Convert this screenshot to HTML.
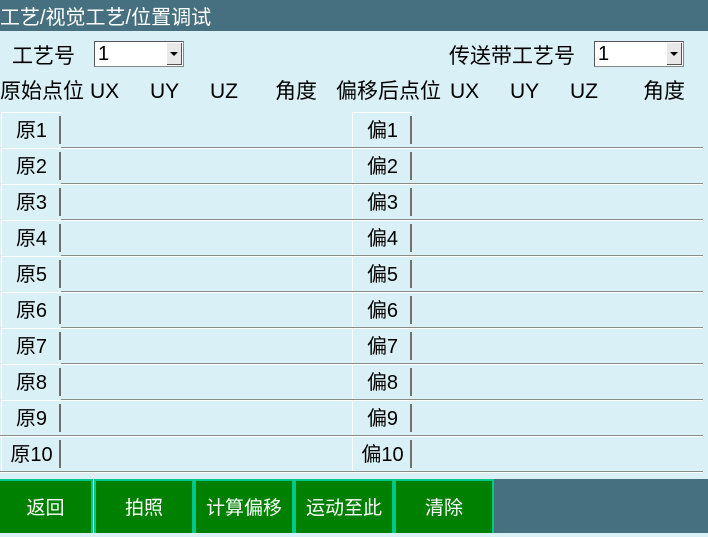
<!DOCTYPE html>
<html><head><meta charset="utf-8"><style>
body{margin:0;width:708px;height:533px;background:#d9f0f6;position:relative;overflow:hidden;font-family:"Liberation Sans","Noto Sans CJK SC",sans-serif;color:#000}
.a{position:absolute}
.t{font-size:21px;white-space:nowrap;line-height:24px}
.lab{position:absolute;width:60px;height:35px;border-top:1px solid #fff;border-left:1px solid #fff;font-size:20px;line-height:36px;text-align:center;box-sizing:border-box}
.lab:after{content:"";position:absolute;right:0;top:3px;bottom:3px;width:2px;background:#707070}
.ln{position:absolute;height:1px;background:#8a8a8a;border-bottom:1px solid #fff}
.btn{position:absolute;top:479px;height:54px;background:#008000;border:2px solid #00c88a;border-bottom:none;box-sizing:border-box;color:#fff;font-size:19px;text-align:center;line-height:56px}
.cb{position:absolute;height:26px;background:#fff;border:1px solid #888;border-top-color:#555;border-left-color:#555;box-sizing:border-box;font-size:20px;line-height:24px;padding-left:3px}
.cb i{position:absolute;right:1px;top:1px;width:15px;height:22px;background:#e8e8e8;border-right:1px solid #555;border-bottom:1px solid #555;box-sizing:border-box}
.cb i:after{content:"";position:absolute;left:3px;top:9px;border:4px solid transparent;border-top:4px solid #000}
</style></head><body>
<div class="a" style="left:0;top:0;width:708px;height:31px;background:#46707f"></div>
<div class="a t" style="left:0;top:6px;color:#fff;font-size:20px">工艺/视觉工艺/位置调试</div>
<div class="a t" style="left:12px;top:45px">工艺号</div>
<div class="cb" style="left:94px;top:41px;width:90px"><span>1</span><i></i></div>
<div class="a t" style="left:449px;top:45px">传送带工艺号</div>
<div class="cb" style="left:594px;top:41px;width:90px"><span>1</span><i></i></div>
<div class="a t" style="left:0;top:80px">原始点位</div>
<div class="a t" style="left:90px;top:80px">UX</div>
<div class="a t" style="left:150px;top:80px">UY</div>
<div class="a t" style="left:210px;top:80px">UZ</div>
<div class="a t" style="left:275px;top:80px">角度</div>
<div class="a t" style="left:336px;top:80px">偏移后点位</div>
<div class="a t" style="left:450px;top:80px">UX</div>
<div class="a t" style="left:510px;top:80px">UY</div>
<div class="a t" style="left:570px;top:80px">UZ</div>
<div class="a t" style="left:643px;top:80px">角度</div>
<div class="lab" style="left:1px;top:112px">原1</div><div class="lab" style="left:352px;top:112px">偏1</div><div class="ln" style="left:61px;top:147px;width:642px"></div>
<div class="lab" style="left:1px;top:148px">原2</div><div class="lab" style="left:352px;top:148px">偏2</div><div class="ln" style="left:61px;top:183px;width:642px"></div>
<div class="lab" style="left:1px;top:184px">原3</div><div class="lab" style="left:352px;top:184px">偏3</div><div class="ln" style="left:61px;top:219px;width:642px"></div>
<div class="lab" style="left:1px;top:220px">原4</div><div class="lab" style="left:352px;top:220px">偏4</div><div class="ln" style="left:61px;top:255px;width:642px"></div>
<div class="lab" style="left:1px;top:256px">原5</div><div class="lab" style="left:352px;top:256px">偏5</div><div class="ln" style="left:61px;top:291px;width:642px"></div>
<div class="lab" style="left:1px;top:292px">原6</div><div class="lab" style="left:352px;top:292px">偏6</div><div class="ln" style="left:61px;top:327px;width:642px"></div>
<div class="lab" style="left:1px;top:328px">原7</div><div class="lab" style="left:352px;top:328px">偏7</div><div class="ln" style="left:61px;top:363px;width:642px"></div>
<div class="lab" style="left:1px;top:364px">原8</div><div class="lab" style="left:352px;top:364px">偏8</div><div class="ln" style="left:61px;top:399px;width:642px"></div>
<div class="lab" style="left:1px;top:400px">原9</div><div class="lab" style="left:352px;top:400px">偏9</div><div class="ln" style="left:0px;top:435px;width:703px"></div>
<div class="lab" style="left:1px;top:436px">原10</div><div class="lab" style="left:352px;top:436px">偏10</div><div class="ln" style="left:0px;top:471px;width:703px"></div>
<div class="a" style="left:494px;top:479px;width:214px;height:54px;background:#46707f"></div>
<div class="btn" style="left:-2px;width:95px">返回</div>
<div class="btn" style="left:94px;width:100px">拍照</div>
<div class="btn" style="left:194px;width:100px">计算偏移</div>
<div class="btn" style="left:294px;width:100px">运动至此</div>
<div class="btn" style="left:394px;width:100px">清除</div>
</body></html>
